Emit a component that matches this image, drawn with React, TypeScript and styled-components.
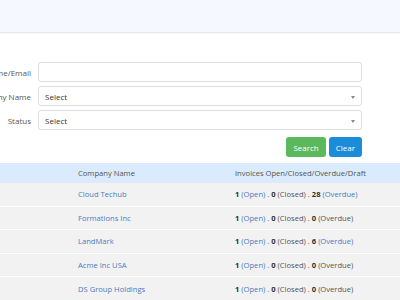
import React from 'react';
import styled, { createGlobalStyle } from 'styled-components';

type Customer = {
  name: string;
  open: number;
  closed: number;
  overdue: number;
};

const customers: Customer[] = [
  { name: 'Cloud Techub', open: 1, closed: 0, overdue: 28 },
  { name: 'Formations Inc', open: 1, closed: 0, overdue: 0 },
  { name: 'LandMark', open: 1, closed: 0, overdue: 6 },
  { name: 'Acme Inc USA', open: 1, closed: 0, overdue: 0 },
  { name: 'DS Group Holdings', open: 1, closed: 0, overdue: 0 },
];

const GlobalStyle = createGlobalStyle`
  html, body {
    margin: 0;
    padding: 0;
    background: #fff;
    overflow: hidden;
  }
  body {
    font-family: 'Open Sans', 'Liberation Sans', sans-serif;
    font-size: 8px;
    color: #555;
  }
`;

const App: React.FC = (): JSX.Element => (
  <>
    <GlobalStyle />
    <StyledPage>
      <TopBar />
      <SearchForm>
        <FieldLabel>Name/Email</FieldLabel>
        <TextInput />
        <FieldLabel>Company Name</FieldLabel>
        <SelectBox>
          <span>Select</span>
          <Caret />
        </SelectBox>
        <FieldLabel>Status</FieldLabel>
        <SelectBox>
          <span>Select</span>
          <Caret />
        </SelectBox>
      </SearchForm>
      <Actions>
        <ActionButton tone="#5cb85c">Search</ActionButton>
        <ActionButton tone="#1a8cd8">Clear</ActionButton>
      </Actions>
      <Table>
        <HeadRow>
          <Cell />
          <Cell>Company Name</Cell>
          <Cell>Invoices Open/Closed/Overdue/Draft</Cell>
        </HeadRow>
        {customers.map((c) => (
          <BodyRow key={c.name}>
            <Cell />
            <Cell>
              <CompanyLink>{c.name}</CompanyLink>
            </Cell>
            <Cell>
              <Count>{c.open}</Count> <Status active>(Open)</Status> .{' '}
              <Count>{c.closed}</Count> <Status>(Closed)</Status> .{' '}
              <Count>{c.overdue}</Count>{' '}
              <Status active={c.overdue > 0}>(Overdue)</Status>
            </Cell>
          </BodyRow>
        ))}
      </Table>
    </StyledPage>
  </>
);

const StyledPage = styled.div`
  width: 400px;
  height: 300px;
  overflow: hidden;
`;

const TopBar = styled.div`
  height: 32px;
  background: #f5f8fe;
  border-bottom: 1px solid #e6e8ec;
  box-shadow: 0 1px 1px rgba(0, 0, 0, 0.03);
`;

const SearchForm = styled.div`
  display: grid;
  grid-template-columns: 90px 324px;
  column-gap: 7px;
  row-gap: 4px;
  align-items: center;
  margin: 29px 0 0 -59px;
`;

const FieldLabel = styled.label`
  text-align: right;
  white-space: nowrap;
  color: #555;
`;

const TextInput = styled.div`
  box-sizing: border-box;
  height: 20px;
  border: 1px solid #dedede;
  border-radius: 3px;
  background: #fff;
`;

const SelectBox = styled.div`
  box-sizing: border-box;
  height: 20px;
  border: 1px solid #dedede;
  border-radius: 3px;
  background: #fff;
  display: flex;
  align-items: center;
  justify-content: space-between;
  padding: 0 6px 0 6px;
  color: #333;
`;

const Caret = styled.span`
  width: 0;
  height: 0;
  border-left: 2.5px solid transparent;
  border-right: 2.5px solid transparent;
  border-top: 3px solid #888;
  margin-top: 2px;
`;

const Actions = styled.div`
  display: flex;
  justify-content: flex-end;
  gap: 3px;
  width: 362px;
  margin-top: 7px;
`;

const ActionButton = styled.button<{ tone: string }>`
  height: 20px;
  padding: 0 7px;
  border: none;
  border-radius: 3px;
  background: ${(p) => p.tone};
  color: #fff;
  font-family: inherit;
  font-size: 8px;
`;

const Table = styled.div`
  margin-top: 6px;
  font-size: 7.6px;
`;

const HeadRow = styled.div`
  display: grid;
  grid-template-columns: 78px 157px 1fr;
  align-items: center;
  height: 20px;
  background: #d9ebfc;
  color: #555;
`;

const BodyRow = styled.div`
  display: grid;
  grid-template-columns: 78px 157px 1fr;
  align-items: center;
  height: 22.6px;
  background: #f2f2f2;
  border-bottom: 1px solid #fff;
  color: #555;
`;

const Cell = styled.div`
  white-space: nowrap;
`;

const CompanyLink = styled.a`
  color: #4a7cbe;
  text-decoration: none;
`;

const Count = styled.b`
  color: #333;
  font-weight: 700;
`;

const Status = styled.span<{ active?: boolean }>`
  color: ${(p) => (p.active ? '#4a7cbe' : '#555')};
`;

export default App;
